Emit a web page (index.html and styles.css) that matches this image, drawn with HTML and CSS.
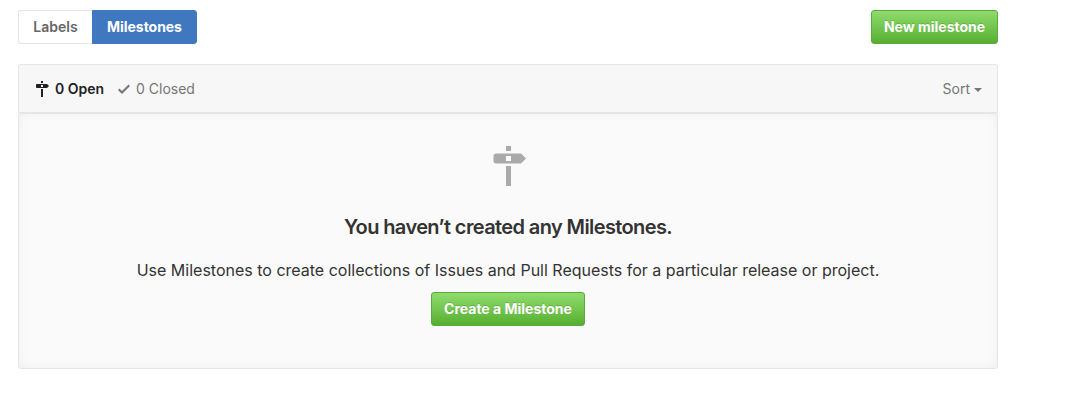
FILE: index.html
```html
<!DOCTYPE html>
<html lang="en">
<head>
<meta charset="utf-8">
<title>Milestones</title>
<link rel="stylesheet" href="styles.css">
</head>
<body>
<main class="page">
  <div class="toolbar">
    <nav class="subnav"><a class="subnav-item labels">Labels</a><a class="subnav-item selected">Milestones</a></nav>
    <button class="btn btn-new">New milestone</button>
  </div>
  <header class="table-header">
    <svg class="icon-sign" viewBox="0 0 14 16"><path d="M8 2H6V0h2v2zm4 5H2c-.55 0-1-.45-1-1V4c0-.55.45-1 1-1h10l2 2-2 2zM8 4H6v2h2V4zM6 16h2V8H6v8z"/></svg>
    <span class="open">0 Open</span>
    <svg class="icon-check" viewBox="0 0 12 16"><path d="M12 5l-8 8-4-4 1.5-1.5L4 10l6.500-6.500z"/></svg>
    <span class="closed">0 Closed</span>
    <span class="sort">Sort</span><i class="caret"></i>
  </header>
  <section class="blankslate">
    <svg class="icon-large" viewBox="0 0 14 16"><path d="M8 2H6V0h2v2zm4 5H2c-.55 0-1-.45-1-1V4c0-.55.45-1 1-1h10l2 2-2 2zM8 4H6v2h2V4zM6 16h2V8H6v8z"/></svg>
    <h3>You haven’t created any Milestones.</h3>
    <p>Use Milestones to create collections of Issues and Pull Requests for a particular release or project.</p>
    <button class="btn btn-create">Create a Milestone</button>
  </section>
</main>
</body>
</html>
```
FILE: styles.css
```css
* { box-sizing: border-box; }
body { margin: 0; background: #fff; color: #333; font: 14px/20px Inter, "Liberation Sans", sans-serif; }
.page { width: 980px; margin-left: 18px; padding-top: 10px; }
.toolbar { display: flex; justify-content: space-between; height: 34px; margin-bottom: 20px; }
.subnav { display: flex; }
.subnav-item { display: flex; align-items: center; justify-content: center; border: 1px solid #e5e5e5; font-weight: 600; color: #666; white-space: nowrap; }
.labels { width: 74px; border-radius: 3px 0 0 3px; border-right: 0; }
.selected { width: 105px; color: #fff; background: #4078c0; border-color: #4078c0; border-radius: 0 3px 3px 0; font-weight: 700; letter-spacing: -0.05px; }
.btn { display: flex; align-items: center; justify-content: center; height: 34px; padding: 0; border: 1px solid #5ca941; border-radius: 3px; background: linear-gradient(#91dd70, #55ae2e); background-origin: border-box; color: #fff; font: 700 14px/20px Inter, "Liberation Sans", sans-serif; text-shadow: 0 -1px 0 rgba(0,0,0,.15); white-space: nowrap; }
.btn-new { width: 127px; }
.table-header { display: flex; align-items: center; height: 49px; padding: 0 15px 0 16px; border: 1px solid #e5e5e5; border-radius: 3px 3px 0 0; background: #f7f7f7; color: #767676; white-space: nowrap; }
.icon-sign { width: 14px; height: 16px; fill: #222; }
.open { width: 50px; margin-left: 6px; color: #222; font-weight: 600; }
.icon-check { width: 12px; height: 16px; margin-left: 13px; fill: #767676; }
.closed { margin-left: 6px; }
.sort { margin-left: auto; }
.caret { margin: 2px 0 0 4px; border: 4px solid transparent; border-top-color: #767676; border-bottom: 0; }
.blankslate { display: flex; flex-direction: column; align-items: center; height: 256px; padding-top: 32px; border: 1px solid #e5e5e5; border-radius: 3px; background: #fafafa; box-shadow: inset 0 0 10px rgba(0,0,0,.05); white-space: nowrap; }
.icon-large { width: 35px; height: 40px; fill: #aaa; }
h3 { margin: 26px 0 0; font-size: 20px; line-height: 30px; font-weight: 600; letter-spacing: -0.61px; }
p { margin: 16px 0 10px; font-size: 16px; line-height: 24px; }
.btn-create { width: 154px; }
```
